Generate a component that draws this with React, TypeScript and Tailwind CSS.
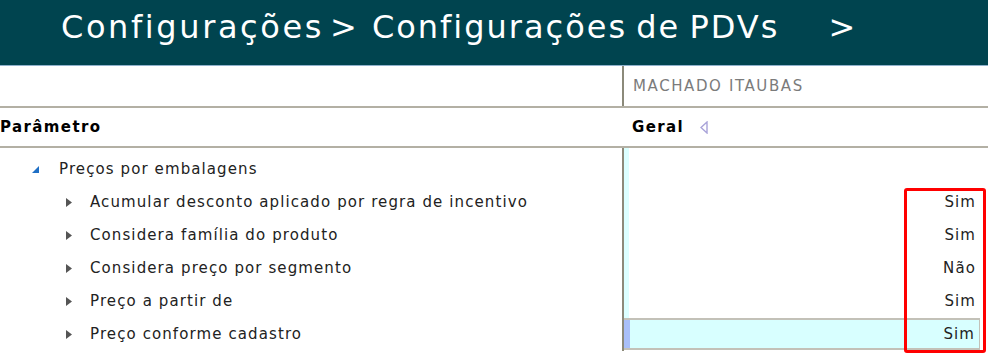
import React from "react";

type Param = {
  label: string;
  value: string;
  selected?: boolean;
};

const params: Param[] = [
  { label: "Acumular desconto aplicado por regra de incentivo", value: "Sim" },
  { label: "Considera família do produto", value: "Sim" },
  { label: "Considera preço por segmento", value: "Não" },
  { label: "Preço a partir de", value: "Sim" },
  { label: "Preço conforme cadastro", value: "Sim", selected: true },
];

const font = { fontFamily: '"DejaVu Sans", Verdana, sans-serif' };

function Collapsed() {
  return (
    <svg width="6" height="9" viewBox="0 0 6 9" className="shrink-0">
      <path d="M0 0 L6 4.5 L0 9 Z" fill="#555" />
    </svg>
  );
}

function Expanded() {
  return (
    <svg width="7" height="7" viewBox="0 0 7 7" className="shrink-0">
      <path d="M7 0 L7 7 L0 7 Z" fill="#1f6fc5" />
    </svg>
  );
}

export default function App() {
  return (
    <div className="relative h-[356px] w-[988px] overflow-hidden bg-white" style={font}>
      <div className="flex h-[66px] items-start border-b border-[#8fb1cc] bg-[#00444f] pl-[61px] pt-[10px] text-[32px] leading-[34px] tracking-[2.6px] text-white">
        <span>Configurações</span>
        <span className="ml-[6px] tracking-normal">&gt;</span>
        <span className="ml-[15px] tracking-[2px] [word-spacing:-3px]">Configurações de PDVs</span>
        <span className="ml-[49px] tracking-normal">&gt;</span>
      </div>

      <div className="flex h-[42px] border-b-2 border-[#b3b0a4]">
        <div className="w-[622px]" />
        <div className="flex flex-1 items-center border-l-2 border-[#8c8a7a] pl-[9px] text-[15px] tracking-[1.6px] text-[#7b7b7b]">
          MACHADO ITAUBAS
        </div>
      </div>

      <div className="flex h-[40px] items-center border-b-2 border-[#b3b0a4] text-[15px] font-bold tracking-[1.4px] text-black">
        <div className="w-[632px]">Parâmetro</div>
        <div className="flex items-center gap-[16px]">
          <span>Geral</span>
          <svg width="8" height="13" viewBox="0 0 8 13">
            <path d="M7 1 L1 6.5 L7 12 Z" fill="none" stroke="#a9a3d9" strokeWidth="1.4" />
          </svg>
        </div>
      </div>

      <div className="flex text-[15px] tracking-[1.1px] text-[#222]">
        <div className="w-[622px]">
          <div className="flex h-[38px] items-center gap-[20px] pl-[32px] pt-[4px]">
            <Expanded />
            <span>Preços por embalagens</span>
          </div>
          {params.map((p) => (
            <div key={p.label} className="flex h-[33px] items-center gap-[18px] pl-[66px]">
              <Collapsed />
              <span>{p.label}</span>
            </div>
          ))}
        </div>
        <div className="flex-1 border-l-2 border-[#8c8a7a]">
          <div className="border-l-[5px] border-[#dcffff]">
            <div className="h-[38px]" />
            {params.map((p) => (
              <div
                key={p.label}
                className={
                  p.selected
                    ? "-ml-[5px] mr-[8px] flex h-[32px] items-center justify-end border-y-2 border-r border-[#c3c1b8] bg-[#d8ffff] pr-[4px]"
                    : "mr-[8px] flex h-[33px] items-center justify-end pr-[4px]"
                }
              >
                {p.selected ? <div className="mr-auto h-full w-[6px] bg-[#a9bff8]" /> : null}
                <span>{p.value}</span>
              </div>
            ))}
          </div>
        </div>
      </div>

      <div className="pointer-events-none absolute left-[904px] top-[188px] h-[165px] w-[82px] rounded-[3px] border-[3px] border-[#ff0000]" />
    </div>
  );
}
